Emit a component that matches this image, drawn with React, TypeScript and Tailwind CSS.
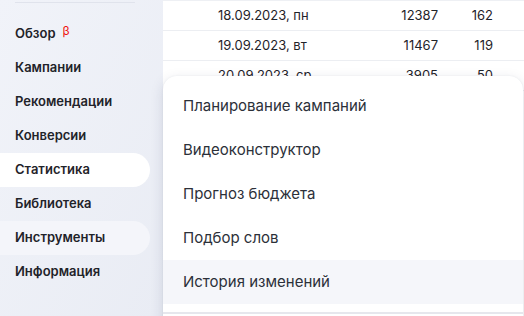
const NAV = [
  { label: "Обзор", beta: true },
  { label: "Кампании" },
  { label: "Рекомендации" },
  { label: "Конверсии" },
  { label: "Статистика", active: true },
  { label: "Библиотека" },
  { label: "Инструменты", hover: true },
  { label: "Информация" },
];

const ROWS = [
  { date: "18.09.2023, пн", shows: "12387", clicks: "162" },
  { date: "19.09.2023, вт", shows: "11467", clicks: "119" },
  { date: "20.09.2023, ср", shows: "3905", clicks: "50" },
];

const TOOLS = [
  "Планирование кампаний",
  "Видеоконструктор",
  "Прогноз бюджета",
  "Подбор слов",
  "История изменений",
];

function Sidebar() {
  return (
    <aside className="flex h-full w-[163px] shrink-0 flex-col bg-gradient-to-br from-[#f1f3f9] to-[#e9ecf4]">
      <div className="mx-[15px] mt-[2px] h-px w-[120px] bg-[#e0e3ec]" />
      <nav className="mt-[14px] flex flex-col">
        {NAV.map((item) => (
          <div
            key={item.label}
            className={
              "flex h-[34px] w-[150px] items-center rounded-r-[17px] pl-[15px] text-[13px] font-semibold text-[#1f2329] " +
              (item.active ? "bg-white" : item.hover ? "bg-[#f4f5fa]" : "")
            }
          >
            {item.label}
            {item.beta && (
              <span className="ml-[7px] -mt-[6px] text-[12px] font-normal text-[#f0140f]">β</span>
            )}
          </div>
        ))}
      </nav>
    </aside>
  );
}

function ToolsMenu() {
  return (
    <div className="absolute left-0 top-[76px] w-[360px] rounded-[14px] bg-white shadow-[0_4px_14px_rgba(30,40,80,0.13),0_0_2px_rgba(30,40,80,0.08)]">
      <ul className="flex flex-col pt-[8px] pb-[8px]">
        {TOOLS.map((tool, i) => (
          <li
            key={tool}
            className={
              "flex h-[44px] items-center pl-[20px] text-[15px] text-[#2c3039] " +
              (i === TOOLS.length - 1 ? "bg-[#f5f6fa]" : "")
            }
          >
            {tool}
          </li>
        ))}
      </ul>
      <div className="h-[2px] bg-[#e6e7ed]" />
      <div className="h-[20px]" />
    </div>
  );
}

export default function App() {
  return (
    <div
      className="flex h-[316px] w-[524px] overflow-hidden bg-white"
      style={{ fontFamily: "Inter, 'Noto Sans', sans-serif" }}
    >
      <Sidebar />
      <main className="relative flex-1">
        <div className="h-px bg-[#eef0f4]" />
        <div className="flex flex-col">
          {ROWS.map((row) => (
            <div
              key={row.date}
              className="flex h-[30px] items-center border-b border-[#eceef2] text-[13px] text-[#1f2329]"
            >
              <span className="ml-[55px] w-[150px]">{row.date}</span>
              <span className="w-[70px] text-right">{row.shows}</span>
              <span className="w-[55px] text-right">{row.clicks}</span>
            </div>
          ))}
        </div>
        <ToolsMenu />
      </main>
    </div>
  );
}
